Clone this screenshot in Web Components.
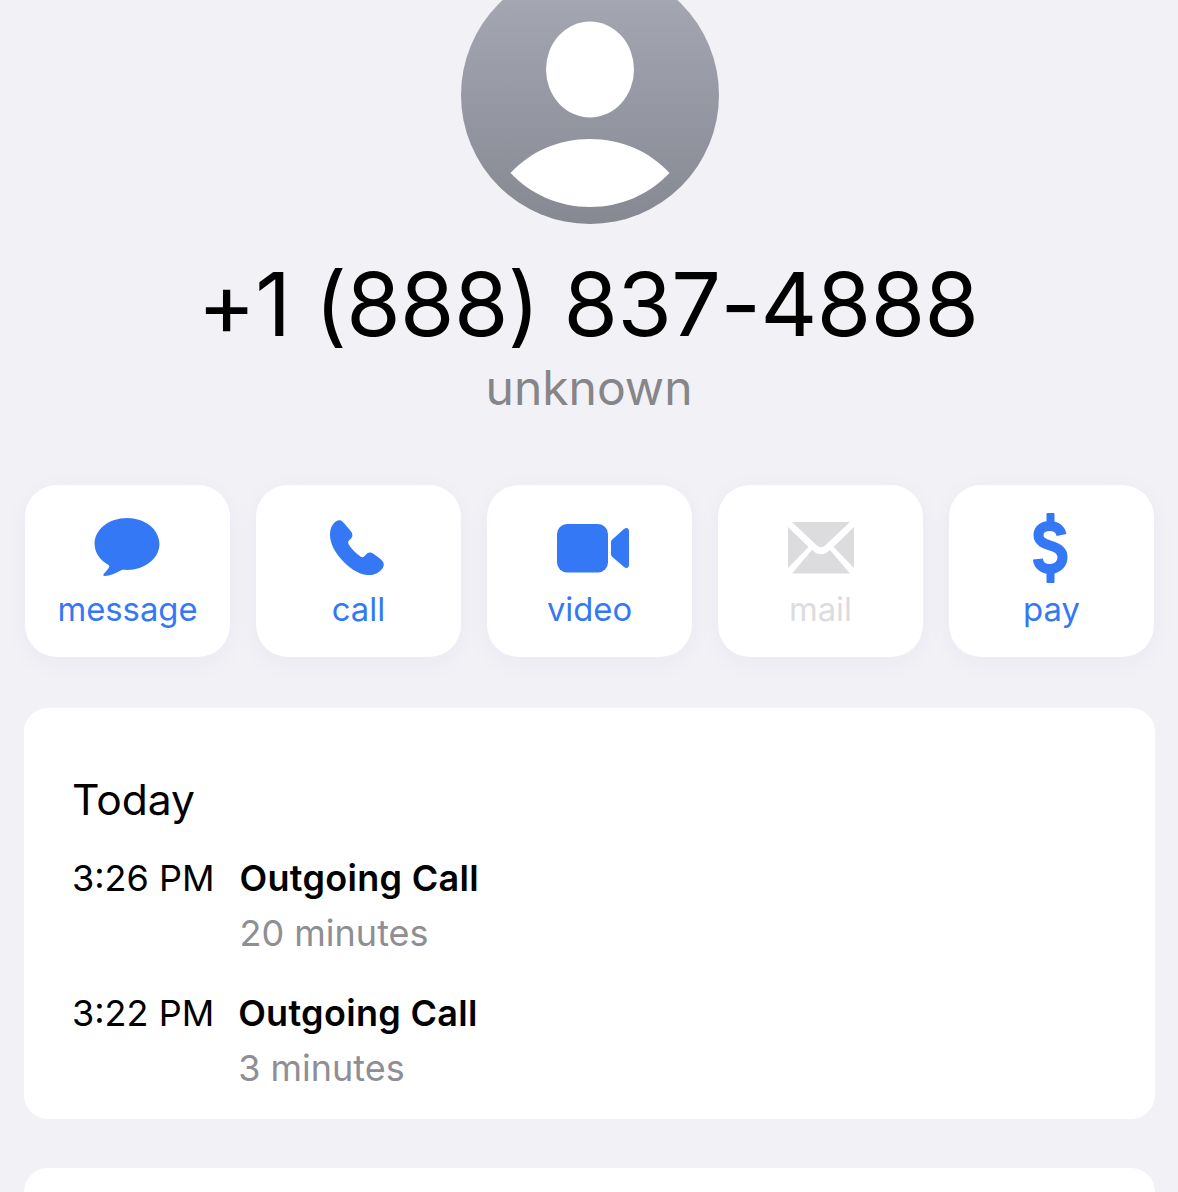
<!DOCTYPE html>
<html>
<head>
<meta charset="utf-8">
<title>Contact</title>
<style>
    html, body { margin: 0; padding: 0; }
    body {
        width: 1178px;
        height: 1192px;
        overflow: hidden;
        background: #f1f1f6;
        font-family: Inter, "Liberation Sans", sans-serif;
    }
</style>
</head>
<body>
<contact-screen>
    <contact-header number="+1 (888) 837-4888" label="unknown"></contact-header>
    <action-row>
        <action-button label="message" icon="message"></action-button>
        <action-button label="call" icon="call"></action-button>
        <action-button label="video" icon="video"></action-button>
        <action-button label="mail" icon="mail" disabled></action-button>
        <action-button label="pay" icon="pay"></action-button>
    </action-row>
    <history-card heading="Today">
        <call-row time="3:26 PM" type="Outgoing Call" duration="20 minutes" gap="25"></call-row>
        <call-row time="3:22 PM" type="Outgoing Call" duration="3 minutes" gap="24"></call-row>
    </history-card>
    <empty-card></empty-card>
</contact-screen>

<script>
/**
 * Contact detail screen, one custom element per block
 */
const ICONS = {
    message: `<svg style="margin-right:2px" width="66" height="60" viewBox="0 0 68 62">
        <path fill="currentColor" d="M34 0C15.500 0 .5 11.800 .5 26.600c0 9.200 5.700 17.200 14.400 21.900.9.5 1 1.300.6 2.200-1 2.400-3.600 5.200-5.600 7.100-.9.9-.3 2.200 1 2.100 5.500-.4 11.500-2.500 16.500-5.700.9-.5 1.600-.7 2.700-.6 1.300.1 2.600.1 3.900.1 18.500 0 33.500-11.900 33.500-26.800C67.500 11.800 52.500 0 34 0Z"/>
    </svg>`,
    call: `<svg style="margin-right:3px" width="55" height="56" viewBox="0 0 55 56">
        <path fill="currentColor" d="M2.500 5C5 1.500 8-.5 11 .5 13 1.500 20 10 21.500 12c1.500 3 1 5-.5 6.500L18.500 21c-.5 1-.5 2 .5 4 3 4.500 7 8.500 11.500 11.500 1.500 1 2.500 1 3.500 0l2.500-2.500c2-2 4.500-2 6.500-.5 3 2 7 5 9.500 7.500 2 2.500 1.500 5.500-.5 8-3 4-8.500 6.500-14.500 6C28 54.500 18 47 11.500 39.500 5 32.500 0 23 0 15 0 11 .5 8 2.500 5Z"/>
    </svg>`,
    video: `<svg style="margin-left:7px" width="72" height="49" viewBox="0 0 72 49">
        <rect fill="currentColor" x="0" y="0" width="51" height="48.500" rx="10"/>
        <path fill="currentColor" d="M54 18c0-1 .5-2 1.500-2.800L67 5c2-1.700 5-1 5 2v34c0 3-3 3.700-5 2L55.500 33c-1-.8-1.500-1.800-1.500-2.800Z"/>
    </svg>`,
    mail: `<svg width="66" height="52" viewBox="0 0 66 52">
        <path fill="currentColor" d="M4 0h58L37 23.500c-2.400 2.200-5.600 2.200-8 0Z"/>
        <path fill="currentColor" d="M0 5v41L20.500 25Z"/>
        <path fill="currentColor" d="M66 5v41L45.500 25Z"/>
        <path fill="currentColor" d="M4 51.500h58L42 28l-2.500 2c-3.800 3-9.200 3-13 0L24 28Z"/>
    </svg>`,
    pay: `<svg style="margin-right:2px" width="35" height="70" viewBox="0 0 35 70">
        <path fill="none" stroke="currentColor" stroke-width="10" d="M28.500 22C27.500 16.500 23.500 13 17 13 10 13 5.500 16.500 5.500 22c0 6 4.500 8.500 11.500 10.500 7.500 2 12.500 5 12.500 11.500C29.500 51 24 56 17 56 10 56 5.500 52 4.800 46"/>
        <rect fill="currentColor" x="13.500" y="0" width="8" height="11" rx="1"/>
        <rect fill="currentColor" x="13.500" y="59" width="8" height="11" rx="1"/>
    </svg>`
};

class ContactScreen extends HTMLElement {
    constructor() {
        super();
        this.attachShadow({ mode: 'open' });
        this.shadowRoot.innerHTML = `
            <style>
                :host { display: block; }
                .screen {
                    display: flex;
                    flex-direction: column;
                }
            </style>
            <div class="screen"><slot></slot></div>
        `;
    }
}

class ContactHeader extends HTMLElement {
    constructor() {
        super();
        this.attachShadow({ mode: 'open' });
    }

    connectedCallback() {
        this.shadowRoot.innerHTML = `
            <style>
                :host {
                    display: flex;
                    flex-direction: column;
                    align-items: center;
                    margin-top: -34px;
                }
                svg { display: block; margin: 0 0 29px 2px; }
                .number {
                    font-size: 88px;
                    line-height: 102px;
                    color: #000;
                    letter-spacing: -0.55px;
                    padding-right: 2px;
                    white-space: nowrap;
                }
                .label {
                    font-size: 48px;
                    line-height: 56px;
                    color: #85858a;
                    margin-top: 5px;
                }
            </style>
            <svg width="258" height="258" viewBox="0 0 258 258">
                <defs>
                    <linearGradient id="avatar-fill" x1="0" y1="0" x2="0" y2="1">
                        <stop offset="0" stop-color="#a8abb6"/>
                        <stop offset="1" stop-color="#868992"/>
                    </linearGradient>
                </defs>
                <circle cx="129" cy="129" r="129" fill="url(#avatar-fill)"/>
                <ellipse cx="129" cy="103.500" rx="44" ry="48" fill="#fff"/>
                <path fill="#fff" d="M49.500 207C70 185 98 173 129 173s59 12 79.500 34c-20 21-48 34-79.500 34S69.500 228 49.500 207Z"/>
            </svg>
            <div class="number">${this.getAttribute('number')}</div>
            <div class="label">${this.getAttribute('label')}</div>
        `;
    }
}

class ActionRow extends HTMLElement {
    constructor() {
        super();
        this.attachShadow({ mode: 'open' });
        this.shadowRoot.innerHTML = `
            <style>
                :host {
                    display: flex;
                    gap: 26px;
                    margin: 69px 24px 0 25px;
                }
            </style>
            <slot></slot>
        `;
    }
}

class ActionButton extends HTMLElement {
    constructor() {
        super();
        this.attachShadow({ mode: 'open' });
    }

    connectedCallback() {
        const disabled = this.hasAttribute('disabled');
        this.shadowRoot.innerHTML = `
            <style>
                :host {
                    display: flex;
                    flex-direction: column;
                    align-items: center;
                    box-sizing: border-box;
                    width: 205px;
                    height: 172px;
                    padding-top: 27px;
                    background: #fff;
                    border-radius: 32px;
                    box-shadow: 0 6px 26px rgba(60, 60, 90, 0.04);
                    color: ${disabled ? '#dcdcdf' : '#3478f6'};
                }
                .icon {
                    height: 72px;
                    width: 100%;
                    display: flex;
                    align-items: center;
                    justify-content: center;
                }
                svg { display: block; }
                .label {
                    font-size: 32.8px;
                    line-height: 40px;
                    margin-top: 5px;
                }
            </style>
            <div class="icon">${ICONS[this.getAttribute('icon')]}</div>
            <div class="label">${this.getAttribute('label')}</div>
        `;
    }
}

class HistoryCard extends HTMLElement {
    constructor() {
        super();
        this.attachShadow({ mode: 'open' });
    }

    connectedCallback() {
        this.shadowRoot.innerHTML = `
            <style>
                :host {
                    display: block;
                    box-sizing: border-box;
                    height: 411px;
                    margin: 51px 23px 0 24px;
                    padding: 62px 48px 0;
                    background: #fff;
                    border-radius: 24px;
                }
                .heading {
                    font-size: 42.6px;
                    line-height: 60px;
                    color: #000;
                }
                .rows {
                    display: flex;
                    flex-direction: column;
                    gap: 32px;
                    margin-top: 24px;
                }
            </style>
            <div class="heading">${this.getAttribute('heading')}</div>
            <div class="rows"><slot></slot></div>
        `;
    }
}

class CallRow extends HTMLElement {
    constructor() {
        super();
        this.attachShadow({ mode: 'open' });
    }

    connectedCallback() {
        this.shadowRoot.innerHTML = `
            <style>
                :host {
                    display: flex;
                    gap: ${this.getAttribute('gap')}px;
                    font-size: 36px;
                    line-height: 48px;
                    white-space: nowrap;
                }
                .time { color: #000; }
                .type { color: #000; font-weight: 600; letter-spacing: 0.3px; }
                .duration { color: #8e8e93; margin-top: 7px; }
            </style>
            <div class="time">${this.getAttribute('time')}</div>
            <div>
                <div class="type">${this.getAttribute('type')}</div>
                <div class="duration">${this.getAttribute('duration')}</div>
            </div>
        `;
    }
}

class EmptyCard extends HTMLElement {
    constructor() {
        super();
        this.attachShadow({ mode: 'open' });
        this.shadowRoot.innerHTML = `
            <style>
                :host {
                    display: block;
                    height: 24px;
                    margin: 49px 23px 0 24px;
                    background: #fff;
                    border-radius: 24px 24px 0 0;
                }
            </style>
        `;
    }
}

customElements.define('contact-screen', ContactScreen);
customElements.define('contact-header', ContactHeader);
customElements.define('action-row', ActionRow);
customElements.define('action-button', ActionButton);
customElements.define('history-card', HistoryCard);
customElements.define('call-row', CallRow);
customElements.define('empty-card', EmptyCard);
</script>
</body>
</html>
